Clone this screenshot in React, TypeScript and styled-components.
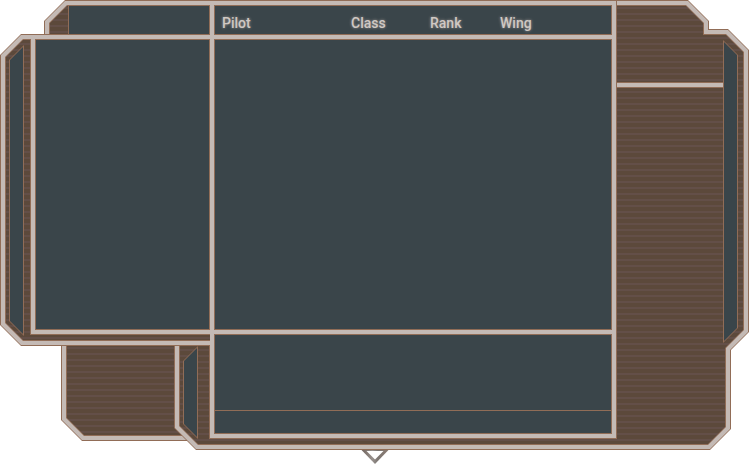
import React from "react";
import styled, { createGlobalStyle } from "styled-components";

const color = {
  line: "#916d57",
  pale: "#c4bab5",
  slate: "#3a454a",
  hull: "#5c493b",
  rib: "#634f48",
};

type Point = [number, number];

const MAIN: Point[] = [
  [65, 0], [688, 0], [709, 21], [709, 29], [728, 29], [749, 50],
  [749, 332], [731, 350], [731, 429], [710, 450], [196, 450], [174, 428],
  [174, 346], [21, 346], [0, 325], [0, 55], [21, 34], [44, 34], [44, 21],
];

const POD: Point[] = [[0, 0], [140, 0], [140, 101], [21, 101], [0, 80]];
const LEFT_BLADE: Point[] = [[15, 0], [15, 291], [0, 276], [0, 15]];
const RIGHT_BLADE: Point[] = [[0, 0], [15, 15], [15, 288], [0, 303]];

/* Moves every edge of a clockwise outline inwards and pins each corner to its nearest sides. */
function outline(points: Point[], width: number, height: number, inset: number) {
  const n = points.length;
  const edges = points.map((p, i) => {
    const q = points[(i + 1) % n];
    const length = Math.hypot(q[0] - p[0], q[1] - p[1]);
    const nx = -(q[1] - p[1]) / length;
    const ny = (q[0] - p[0]) / length;
    return { nx, ny, c: nx * p[0] + ny * p[1] + inset };
  });
  const pin = (v: number, size: number, far: boolean) =>
    far ? `calc(100% - ${Math.round(size - v)}px)` : `${Math.round(v)}px`;
  const corners = points.map((p, i) => {
    const a = edges[(i + n - 1) % n];
    const b = edges[i];
    const det = a.nx * b.ny - a.ny * b.nx;
    const x = (a.c * b.ny - a.ny * b.c) / det;
    const y = (a.nx * b.c - a.c * b.nx) / det;
    return `${pin(x, width, p[0] > width / 2)} ${pin(y, height, p[1] > height / 2)}`;
  });
  return `polygon(${corners.join(", ")})`;
}

const GlobalStyle = createGlobalStyle`
  * { box-sizing: border-box; }
  body { margin: 0; background: #fff; font-family: Roboto, "Liberation Sans", sans-serif; }
`;

const Console = styled.main`
  display: grid;
`;

const Stack = styled.div`
  display: grid;
  > * { grid-area: 1 / 1; }
`;

const ribs = `repeating-linear-gradient(${color.hull} 0 1px, ${color.rib} 1px 3px, ${color.hull} 3px 6px)`;

const Shell = styled.div<{ $clip: string; $fill: string }>`
  clip-path: ${(p) => p.$clip};
  background: ${(p) => p.$fill};
`;

const Pod = styled(Stack)`
  align-self: end;
  width: 140px;
  height: 101px;
  margin: 0 0 9px 61px;
`;

const Body = styled.div`
  isolation: isolate;
  display: grid;
  grid-template-columns: 210px minmax(0, 1fr) 132px;
`;

const Port = styled.section`
  display: grid;
  grid-template-rows: 34px 312px 104px;
`;

const Tab = styled.div`
  margin: 5px 0 0 68px;
  border: 1px solid ${color.line};
  border-bottom: 0;
  background: ${color.slate};
`;

const Wing = styled.div`
  display: grid;
  grid-template-columns: 30px 1fr;
`;

const Blade = styled(Stack)<{ $margin: string }>`
  margin: ${(p) => p.$margin};
`;

const Hold = styled.div`
  display: grid;
  grid-template-rows: 5px 296px 1fr;
`;

const Lintel = styled.div`
  border-top: 1px solid ${color.line};
  background: ${color.pale};
`;

const Frame = styled.div`
  display: grid;
  border: solid ${color.line};
  border-width: 0 0 1px 1px;
  padding: 0 0 4px 4px;
  background: ${color.pale};
`;

const Beam = styled.div`
  align-self: end;
  height: 6px;
  border: solid ${color.line};
  border-width: 1px 0;
  background: ${color.pale};
`;

const Fin = styled.div`
  display: grid;
  margin-bottom: 11px;
  border-right: 1px solid ${color.line};
`;

const Roster = styled.section`
  display: grid;
  grid-template-rows: 30px 291px 100px;
  gap: 4px;
  margin: 1px 0 11px;
  padding: 4px;
  border-right: 1px solid ${color.line};
  border-bottom: 1px solid ${color.line};
  background: ${color.pale};
`;

const Table = styled.table`
  width: 100%;
  height: 30px;
  border: 1px solid ${color.line};
  border-spacing: 0;
  table-layout: fixed;
  background: ${color.slate};
`;

const Heading = styled.th<{ $width?: number }>`
  width: ${(p) => (p.$width ? `${p.$width}px` : "auto")};
  padding: 6px 0 0 7px;
  text-align: left;
  font-size: 14px;
  line-height: 16px;
  font-weight: 500;
  color: #d0c8c3;
  text-shadow: 0 0 3px #a39b97;
`;

const Screen = styled.div`
  border: 1px solid ${color.line};
  background: ${color.slate};
`;

const Details = styled(Screen)`
  display: grid;
  grid-template-rows: 76px 1fr;
`;

const Summary = styled.div`
  border-bottom: 1px solid ${color.line};
`;

const Starboard = styled.section`
  display: grid;
  grid-template-columns: 1fr 26px;
`;

const Bay = styled.div`
  padding-top: 82px;
`;

const Expand = styled.button`
  justify-self: center;
  display: block;
  width: 28px;
  height: 14px;
  padding: 0;
  border: 0;
  background: none;
  cursor: pointer;
`;

function Plating({ points, width, height }: { points: Point[]; width: number; height: number }) {
  return (
    <>
      <Shell $clip={outline(points, width, height, 0)} $fill={color.line} />
      <Shell $clip={outline(points, width, height, 1)} $fill={color.pale} />
      <Shell $clip={outline(points, width, height, 5)} $fill={color.line} />
      <Shell $clip={outline(points, width, height, 6)} $fill={ribs} />
    </>
  );
}

function SideBlade({ points, height, margin }: { points: Point[]; height: number; margin: string }) {
  return (
    <Blade $margin={margin}>
      <Shell $clip={outline(points, 15, height, 0)} $fill={color.line} />
      <Shell $clip={outline(points, 15, height, 1)} $fill={color.slate} />
    </Blade>
  );
}

export default function App() {
  return (
    <Console>
      <GlobalStyle />
      <Stack>
        <Pod>
          <Plating points={POD} width={140} height={101} />
        </Pod>
        <Plating points={MAIN} width={749} height={450} />
        <Body>
          <Port>
            <Tab />
            <Wing>
              <SideBlade points={LEFT_BLADE} height={291} margin="11px 6px 10px 9px" />
              <Hold>
                <Lintel />
                <Frame>
                  <Screen />
                </Frame>
                <Beam />
              </Hold>
            </Wing>
            <Fin>
              <SideBlade points={LEFT_BLADE} height={291} margin="0 11px 0 183px" />
            </Fin>
          </Port>
          <Roster>
            <Table>
              <thead>
                <tr>
                  <Heading scope="col" $width={129}>Pilot</Heading>
                  <Heading scope="col" $width={79}>Class</Heading>
                  <Heading scope="col" $width={70}>Rank</Heading>
                  <Heading scope="col">Wing</Heading>
                </tr>
              </thead>
            </Table>
            <Screen />
            <Details>
              <Summary />
            </Details>
          </Roster>
          <Starboard>
            <Bay>
              <Beam />
            </Bay>
            <SideBlade points={RIGHT_BLADE} height={303} margin="40px 11px 107px 0" />
          </Starboard>
        </Body>
      </Stack>
      <Expand type="button" aria-label="Expand">
        <svg width="28" height="14" viewBox="0 0 28 14">
          <defs>
            <linearGradient id="chevron" x1="0" y1="0" x2="1" y2="0">
              <stop offset="0" stopColor="#6f625b" />
              <stop offset="0.4" stopColor="#98918d" />
              <stop offset="0.6" stopColor="#7d7773" />
              <stop offset="1" stopColor="#8a7a70" />
            </linearGradient>
          </defs>
          <path d="M0.500 0H27.500L14 14Z" fill="url(#chevron)" />
          <path d="M5.500 1H22.500L14 9.500Z" fill="#fff" />
        </svg>
      </Expand>
    </Console>
  );
}
